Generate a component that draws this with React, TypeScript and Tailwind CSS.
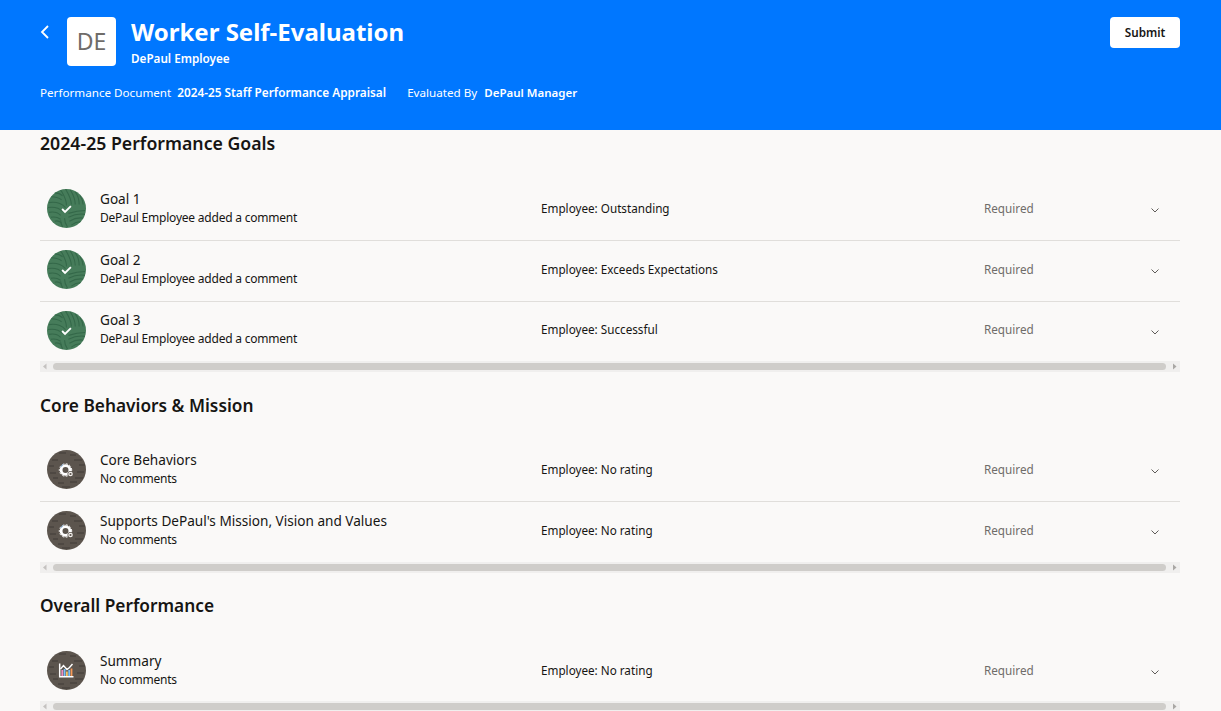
import React from "react";

const font = "font-['Noto_Sans','Liberation_Sans',sans-serif]";

function GoalBadge() {
  return (
    <svg width="39" height="39" viewBox="0 0 40 40" className="shrink-0">
      <defs>
        <clipPath id="gc"><circle cx="20" cy="20" r="20" /></clipPath>
      </defs>
      <circle cx="20" cy="20" r="20" fill="#467c5a" />
      <g clipPath="url(#gc)" fill="none" stroke="#346849" strokeWidth="1.1">
        <path d="M2 14c6-1 12 0 17 5M1 19c6-1 11 0 15 4M2 24c5-1 9 0 12 3M4 29c4-1 7 0 10 2M8 33c3-1 5 0 7 2" />
        <path d="M14 1c3 5 6 9 6 16M19 0c3 5 6 10 6 16M24 1c3 5 5 9 5 15M29 3c3 4 4 8 4 13M34 7c2 3 3 6 3 9" />
        <path d="M22 25c6-2 11-3 17-3M22 29c6-3 11-4 17-3M23 33c5-3 10-4 15-3M25 37c4-3 8-4 12-3" />
        <path d="M4 8c4 0 8 1 11 3M8 4c3 0 6 1 8 3M18 30c0 3 1 6 3 9M14 32c0 3 1 5 2 7" />
      </g>
      <path d="M15.5 20.5l3 3 6-6" fill="none" stroke="#fff" strokeWidth="1.9" />
    </svg>
  );
}

function Bark({ id, children }: { id: string; children: React.ReactNode }) {
  return (
    <svg width="39" height="39" viewBox="0 0 39 39" className="shrink-0">
      <defs>
        <clipPath id={id}><circle cx="19.5" cy="19.5" r="19.5" /></clipPath>
      </defs>
      <circle cx="19.5" cy="19.5" r="19.5" fill="#5c554e" />
      <g clipPath={`url(#${id})`} stroke="#3b3632" strokeWidth="0.8" fill="none">
        <path d="M12 3h7M23 5h6M5 10h6M27 10h8M2 16h5M32 15h6M3 23h6M30 22h7M6 28h5M28 28h8M11 33h6M23 32h7M15 37h8" />
      </g>
      {children}
    </svg>
  );
}

function GearBadge({ id }: { id: string }) {
  return (
    <Bark id={id}>
      <circle cx="18.5" cy="20" r="4.4" fill="none" stroke="#fff" strokeWidth="2.8" />
      <circle cx="18.5" cy="20" r="6.2" fill="none" stroke="#fff" strokeWidth="1" strokeDasharray="2 1.6" />
      <path d="M13.8 17a6 6 0 0 1 2.5-2.6" fill="none" stroke="#7fb0e0" strokeWidth="0.9" />
      <circle cx="23.5" cy="24" r="3" fill="#5c554e" />
      <circle cx="23.5" cy="24" r="1.7" fill="none" stroke="#f4f1ee" strokeWidth="1.2" />
    </Bark>
  );
}

function ChartBadge({ id }: { id: string }) {
  return (
    <Bark id={id}>
      <path d="M12.7 12.5v13.2H26.5" fill="none" stroke="#fff" strokeWidth="1.5" />
      <path d="M13.5 18l3-3.5 3.5 4 2.5-2 3-3.5" fill="none" stroke="#fff" strokeWidth="1.4" />
      <rect x="14.4" y="19" width="1.8" height="6" fill="#f08cc0" />
      <rect x="16.7" y="18" width="1.8" height="7" fill="#78c0fa" />
      <rect x="19" y="20.5" width="1.8" height="4.5" fill="#f8c060" />
      <rect x="21.3" y="19" width="1.8" height="6" fill="#78c0fa" />
      <rect x="23.6" y="17.5" width="1.8" height="7.5" fill="#f89a58" />
    </Bark>
  );
}

type RowData = { title: string; sub: string; rating: string; icon: React.ReactNode };

function Row({ title, sub, rating, icon, height }: RowData & { height: string }) {
  return (
    <div className={`flex items-center ${height}`}>
      <div className="-mt-[1px] w-[60px] shrink-0 pl-[7px]">{icon}</div>
      <div className="-mt-[3px] w-[441px] shrink-0">
        <div className="text-[13.6px] leading-[19px] text-[#161513]">{title}</div>
        <div className="text-[12px] leading-[19px] tracking-[-0.22px] text-[#161513]">{sub}</div>
      </div>
      <div className="-mt-[1px] w-[443px] shrink-0 text-[11.7px] text-[#161513]">{rating}</div>
      <div className="-mt-[1px] flex-1 text-[11.7px] text-[#6f6c69]">Required</div>
      <svg width="10" height="10" viewBox="0 0 10 10" className="mr-[20px] mt-[2px]">
        <path d="M1.5 3.5L5 7l3.5-3.5" fill="none" stroke="#5f5c59" strokeWidth="1" />
      </svg>
    </div>
  );
}

function Scrollbar() {
  return (
    <div className="flex h-[11px] items-center bg-[#f0efee]">
      <svg width="13" height="11" viewBox="0 0 13 11" className="shrink-0">
        <path d="M6.5 2.5v6L3 5.5z" fill="#c4c2c0" />
      </svg>
      <div className="h-[7px] flex-1 rounded-full bg-[#cfcdca]" />
      <svg width="14" height="11" viewBox="0 0 14 11" className="shrink-0">
        <path d="M7 2.5v6l3.5-3z" fill="#a9a7a4" />
      </svg>
    </div>
  );
}

function Section({
  title,
  rows,
  gapTop,
  gapList,
  titleSize,
  lastHeight,
}: {
  title: string;
  rows: RowData[];
  gapTop: string;
  gapList: string;
  titleSize: string;
  lastHeight: string;
}) {
  return (
    <section className={gapTop}>
      <h2 className={`h-[26px] font-semibold leading-[26px] text-[#161513] ${titleSize}`}>{title}</h2>
      <div className={gapList}>
        {rows.map((r, i) => {
          const last = i === rows.length - 1;
          return (
            <Row
              key={r.title}
              {...r}
              height={last ? lastHeight : "h-[61px] border-b border-[#e0dedb] pb-[2px]"}
            />
          );
        })}
      </div>
      <Scrollbar />
    </section>
  );
}

export default function App() {
  const added = "DePaul Employee added a comment";
  return (
    <div className={`h-[711px] w-full overflow-hidden bg-[#faf9f8] ${font}`}>
      <header className="h-[130px] bg-[#0077ff] pl-[40px] pr-[41px] pt-[17px] text-white">
        <div className="flex items-start">
          <svg width="10" height="16" viewBox="0 0 10 16" className="mt-[7px]">
            <path d="M8 2L2 8l6 6" fill="none" stroke="#fff" strokeWidth="1.8" />
          </svg>
          <div className="ml-[17px] flex h-[49px] w-[49px] items-center justify-center rounded-[4px] bg-white text-[23px] text-[#6f6c69]">
            DE
          </div>
          <div className="ml-[15px]">
            <h1 className="text-[24px] font-bold leading-[30px]">Worker Self-Evaluation</h1>
            <div className="mt-[3px] text-[11.7px] font-semibold leading-[17px]">DePaul Employee</div>
          </div>
          <button className="ml-auto h-[31px] w-[70px] rounded-[4px] bg-white text-[11.7px] font-semibold text-[#161513]">
            Submit
          </button>
        </div>
        <div className="mt-[17px] flex text-[11.65px] leading-[17px]">
          <span>Performance Document</span>
          <span className="ml-[6px] text-[11.8px] font-semibold">2024-25 Staff Performance Appraisal</span>
          <span className="ml-[21px]">Evaluated By</span>
          <span className="ml-[7px] text-[11.5px] font-semibold">DePaul Manager</span>
        </div>
      </header>
      <main className="pl-[40px] pr-[41px]">
        <Section
          title="2024-25 Performance Goals"
          titleSize="text-[17.7px]"
          gapTop="pt-0"
          gapList="mt-[24px]"
          lastHeight="h-[59px] pb-[2px]"
          rows={[
            { title: "Goal 1", sub: added, rating: "Employee: Outstanding", icon: <GoalBadge /> },
            { title: "Goal 2", sub: added, rating: "Employee: Exceeds Expectations", icon: <GoalBadge /> },
            { title: "Goal 3", sub: added, rating: "Employee: Successful", icon: <GoalBadge /> },
          ]}
        />
        <Section
          title="Core Behaviors & Mission"
          titleSize="text-[17.3px]"
          gapTop="pt-[21px]"
          gapList="mt-[22px]"
          lastHeight="h-[60px] pb-[2px]"
          rows={[
            { title: "Core Behaviors", sub: "No comments", rating: "Employee: No rating", icon: <GearBadge id="b1" /> },
            { title: "Supports DePaul's Mission, Vision and Values", sub: "No comments", rating: "Employee: No rating", icon: <GearBadge id="b2" /> },
          ]}
        />
        <Section
          title="Overall Performance"
          titleSize="text-[17.3px]"
          gapTop="pt-[20px]"
          gapList="mt-[22px]"
          lastHeight="h-[60px]"
          rows={[
            { title: "Summary", sub: "No comments", rating: "Employee: No rating", icon: <ChartBadge id="b3" /> },
          ]}
        />
      </main>
    </div>
  );
}
